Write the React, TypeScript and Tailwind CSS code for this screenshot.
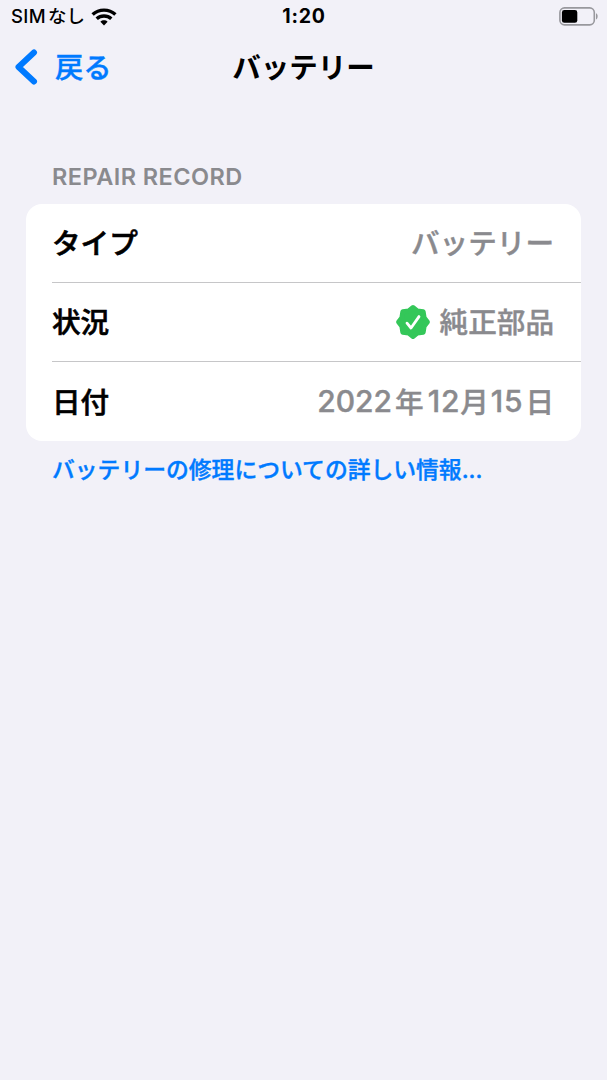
import type { ReactNode } from 'react';

function WifiIcon() {
  return (
    <svg width="26" height="18" viewBox="0 0 26 18" fill="none" stroke="#000" strokeWidth="3.4">
      <path d="M1.6 6.6C8 0.6 18 0.6 24.4 6.6" />
      <path d="M5.7 10.8C9.8 7 16.2 7 20.3 10.8" />
      <path d="M13 17.4 9.4 13.7C11.4 11.9 14.6 11.9 16.6 13.7Z" fill="#000" stroke="none" />
    </svg>
  );
}

function BatteryIcon() {
  return (
    <svg width="40" height="19" viewBox="0 0 40 19" fill="none">
      <rect x="0.9" y="0.9" width="34.4" height="17" rx="4.6" stroke="#98989d" strokeWidth="1.6" />
      <rect x="2.9" y="3" width="15.4" height="12.8" rx="2.4" fill="#000" />
      <path d="M37 6.3C39.2 7.1 39.2 11.7 37 12.5Z" fill="#98989d" />
    </svg>
  );
}

function VerifiedBadge() {
  return (
    <svg width="36" height="36" viewBox="0 0 36 36" fill="none">
      <path
        d="M18 3.6 22.3 6.9 28.2 7.8 29.1 13.7 32.4 18 29.1 22.3 28.2 28.2 22.3 29.1 18 32.4 13.7 29.1 7.8 28.2 6.9 22.3 3.6 18 6.9 13.7 7.8 7.8 13.7 6.9Z"
        fill="#34c759"
        stroke="#34c759"
        strokeWidth="5"
        strokeLinejoin="round"
      />
      <path d="M12 19.2 16 24 24 12.6" stroke="#fff" strokeWidth="2.8" strokeLinecap="round" strokeLinejoin="round" />
    </svg>
  );
}

function Row({ label, children, last = false }: { label: string; children: ReactNode; last?: boolean }) {
  return (
    <div className="pl-[26px]">
      <div className={`flex h-[79px] items-center justify-between pt-[3px] pr-[27px] ${last ? '' : 'border-b border-[#c6c6c8]'}`}>
        <span className="text-[28.6px] font-medium text-black [-webkit-text-stroke:0.6px]">{label}</span>
        <span className="flex items-center text-[28.6px] font-medium text-[#8a8a8e] [-webkit-text-stroke:0.4px]">{children}</span>
      </div>
    </div>
  );
}

export default function App() {
  return (
    <div className="h-[1080px] w-[608px] overflow-hidden border-r border-white bg-[#f2f1f8] font-['Inter','Noto_Sans_CJK_JP',sans-serif] leading-none whitespace-nowrap">
      <div className="grid h-[33px] grid-cols-3 items-center pr-[8px] pl-[11px]">
        <div className="flex items-center text-[18.5px] font-medium">
          <span className="tracking-[0.4px]">SIM</span>
          <span className="ml-[2px]">なし</span>
          <span className="ml-[6px]"><WifiIcon /></span>
        </div>
        <span className="pt-px pr-[2px] text-center text-[19.5px] font-bold tracking-[0.8px]">1:20</span>
        <span className="flex justify-end"><BatteryIcon /></span>
      </div>

      <header className="grid h-[68px] grid-cols-3 items-center px-[14px]">
        <button className="flex items-center text-[28.3px] font-medium text-[#007aff] [-webkit-text-stroke:0.4px]">
          <svg width="24" height="38" viewBox="0 0 24 38" fill="none" stroke="currentColor" strokeWidth="6" strokeLinecap="round" strokeLinejoin="round">
            <path d="M20 4.5 4.5 19 20 33.5" />
          </svg>
          <span className="mt-[2px] ml-[17px]">戻る</span>
        </button>
        <h1 className="pt-[2px] text-center text-[28.5px] font-bold">バッテリー</h1>
      </header>

      <main className="px-[26px] pt-[62px]">
        <h2 className="h-[41px] pl-[26px] text-[23.5px] leading-[27px] font-semibold tracking-[0.45px] text-[#8a8a8e]">REPAIR RECORD</h2>
        <section className="w-[555px] rounded-[16px] bg-white">
          <Row label="タイプ">バッテリー</Row>
          <Row label="状況">
            <span className="mr-[9px] -mt-[4px]"><VerifiedBadge /></span>
            純正部品
          </Row>
          <Row label="日付" last>
            <span className="-mt-[4px] text-[30px]">2022</span>
            <span className="mr-[4px] ml-[3px]">年</span>
            <span className="-mt-[4px] text-[30px] tracking-[0.8px]">12</span>
            <span className="mr-[2px]">月</span>
            <span className="-mt-[4px] mr-[2px] text-[30px] tracking-[0.8px]">15</span>
            <span>日</span>
          </Row>
        </section>
        <a className="mt-[18px] block pl-[26px] text-[22.8px] font-medium text-[#007aff] [-webkit-text-stroke:0.4px]">バッテリーの修理についての詳しい情報...</a>
      </main>
    </div>
  );
}
